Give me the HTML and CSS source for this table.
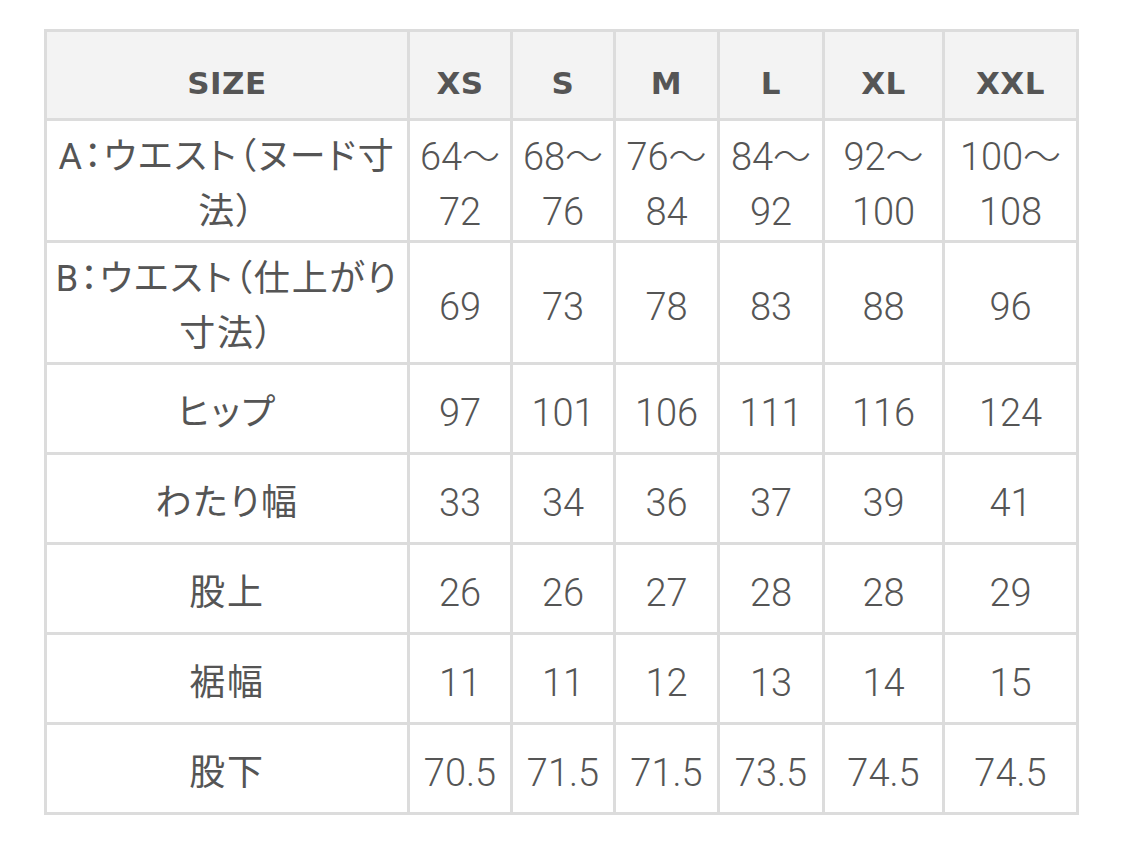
FILE: index.html
```html
<!DOCTYPE html>
<html lang="ja">
<head>
<meta charset="utf-8">
<title>Size chart</title>
<link rel="stylesheet" href="styles.css">
</head>
<body>
<div class="page">
<table class="size-table">
<colgroup>
<col class="c-label"><col class="c-xs"><col class="c-s"><col class="c-m"><col class="c-l"><col class="c-xl"><col class="c-xxl">
</colgroup>
<thead>
<tr class="head-row">
<th>SIZE</th><th>XS</th><th>S</th><th>M</th><th>L</th><th>XL</th><th>XXL</th>
</tr>
</thead>
<tbody>
<tr class="tall"><td class="label">A：ウエスト（ヌード寸法）</td><td>64～72</td><td>68～76</td><td>76～84</td><td>84～92</td><td>92～100</td><td>100～108</td></tr>
<tr class="tall"><td class="label">B：ウエスト（仕上がり寸法）</td><td>69</td><td>73</td><td>78</td><td>83</td><td>88</td><td>96</td></tr>
<tr><td class="label">ヒップ</td><td>97</td><td>101</td><td>106</td><td>111</td><td>116</td><td>124</td></tr>
<tr><td class="label">わたり幅</td><td>33</td><td>34</td><td>36</td><td>37</td><td>39</td><td>41</td></tr>
<tr><td class="label">股上</td><td>26</td><td>26</td><td>27</td><td>28</td><td>28</td><td>29</td></tr>
<tr><td class="label">裾幅</td><td>11</td><td>11</td><td>12</td><td>13</td><td>14</td><td>15</td></tr>
<tr><td class="label">股下</td><td>70.5</td><td>71.5</td><td>71.5</td><td>73.5</td><td>74.5</td><td>74.5</td></tr>
</tbody>
</table>
</div>
</body>
</html>
```

FILE: styles.css
```css
html, body {
  margin: 0;
  padding: 0;
  background: #ffffff;
}
.page {
  padding: 29px 0 0 44px;
}
.size-table {
  border-collapse: collapse;
  table-layout: fixed;
  width: 1035px;
  font-family: Roboto, "Noto Sans CJK JP", sans-serif;
  color: #555555;
  font-size: 38px;
  font-weight: 300;
}
.c-label { width: 363px; }
.c-xs { width: 103px; }
.c-s { width: 103px; }
.c-m { width: 104px; }
.c-l { width: 105px; }
.c-xl { width: 120px; }
.c-xxl { width: 134px; }
.size-table th,
.size-table td {
  border: 3px solid #dcdcdc;
  text-align: center;
  vertical-align: middle;
  padding: 9px 4px 0;
  line-height: 55px;
  font-weight: 300;
}
.size-table tr {
  height: 90px;
}
.size-table .head-row {
  height: 89px;
}
.size-table td.label {
  font-size: 36px;
  font-weight: 400;
  font-feature-settings: "palt";
  letter-spacing: 1.8px;
}
.size-table th {
  background: #f3f3f3;
  font-family: "DejaVu Sans", Lato, sans-serif;
  font-weight: 700;
  font-size: 31px;
  letter-spacing: 0.5px;
  padding-top: 16px;
}
```
